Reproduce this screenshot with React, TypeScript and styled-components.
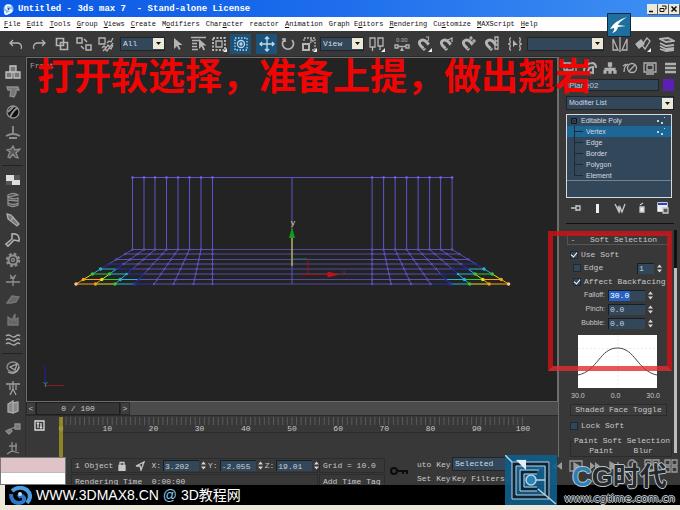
import React from "react";
import styled, { createGlobalStyle } from "styled-components";

const mono = '"Liberation Mono", "Noto Sans CJK SC", monospace';
const sans = '"Liberation Sans", "Noto Sans CJK SC", sans-serif';
const panel = "#383838";
const field = "#33475a";

const GlobalStyle = createGlobalStyle`
  * { box-sizing: border-box; }
  body { margin: 0; background: ${panel}; }
  button, input, select { font: inherit; color: inherit; margin: 0; padding: 0; border: 0; border-radius: 0; background: none; }
  svg { display: block; flex: none; }
`;

const Window = styled.div`
  position: relative;
  display: flex;
  flex-direction: column;
  height: 100vh;
  overflow: hidden;
  background: ${panel};
  color: #c8c8c8;
  font: 8px/10px ${mono};
  white-space: pre;
`;

const TitleBar = styled.header`
  display: flex;
  align-items: center;
  gap: 4px;
  flex: none;
  height: 17px;
  padding: 0 1px 0 3px;
  background: linear-gradient(90deg, #0a58e4, #1b6bec 45%, #3f90f2);
  color: #fff;
`;
const Title = styled.h1`
  flex: 1;
  margin: 0;
  font: bold 9px/12px ${mono};
`;
const CaptionButton = styled.button`
  display: grid;
  place-items: center;
  width: 10px;
  height: 10px;
  margin-left: -3px;
  background: #ece9d8 !important;
  box-shadow: 1px 1px 0 #55585c;
`;

const MenuBar = styled.nav`
  display: flex;
  align-items: center;
  gap: 6px;
  flex: none;
  height: 14px;
  padding-left: 4px;
  background: #fff;
  color: #111;
  font: 7px/10px ${mono};
`;
const MenuItem = styled.button``;

const Toolbar = styled.div`
  display: flex;
  align-items: center;
  flex: none;
  height: 26px;
  padding: 1px 0 1px 4px;
  border-bottom: 1px solid #2b2b2b;
`;
const ToolSlot = styled.button<{ $w: number; $on?: boolean; $after?: number }>`
  display: grid;
  place-items: center;
  flex: none;
  width: ${(p) => p.$w}px;
  height: 20px;
  margin-right: ${(p) => p.$after ?? 0}px;
  background: ${(p) => (p.$on ? "#1d5278" : "transparent")} !important;
  color: ${(p) => (p.$on ? "#b9dcf2" : "#b4b4b4")} !important;
`;

const DropFrame = styled.label<{ $w?: number; $after?: number; $sans?: boolean }>`
  display: flex;
  align-items: center;
  flex: ${(p) => (p.$w ? `0 0 ${p.$w}px` : "1")};
  min-width: 0;
  height: 14px;
  margin-right: ${(p) => p.$after ?? 0}px;
  border: 1px solid #202428;
  background: ${field};
  color: #d4dbe1;
  font: ${(p) => (p.$sans ? `7px/10px ${sans}` : `8px/10px ${mono}`)};
`;
const DropSelect = styled.select`
  flex: 1;
  min-width: 0;
  padding-left: 2px !important;
  appearance: none;
  outline: 0;
`;
const DropArrow = styled.span`
  display: grid;
  place-items: center;
  flex: none;
  width: 11px;
  height: 11px;
  background: #ece9d8;
`;

const Work = styled.main`
  display: flex;
  flex: 1;
  min-height: 0;
`;
const SideTools = styled.aside`
  display: flex;
  flex-direction: column;
  flex: none;
  width: 26px;
  padding-top: 5px;
  border-right: 1px solid #303030;
  overflow: hidden;
`;
const SideGroup = styled.div`
  display: flex;
  flex-direction: column;
  padding-bottom: 3px;
  margin: 0 2px 4px;
  border-bottom: 1px solid #222;
`;
const SideButton = styled.button`
  display: grid;
  place-items: center;
  height: 20px;
  color: #8f8f8f !important;
`;

const Center = styled.section`
  display: flex;
  flex-direction: column;
  flex: 1;
  min-width: 0;
`;
const Viewport = styled.div`
  position: relative;
  flex: 1;
  min-height: 0;
  border: 1px solid #6d6d6d;
  background: #232323;
`;
const ViewName = styled.span`
  position: absolute;
  top: 3px;
  left: 3px;
  color: #a0a0a0;
`;
const Caption = styled.p`
  position: absolute;
  z-index: 3;
  top: -6px;
  left: 10px;
  margin: 0;
  color: #f00505;
  font: bold 37px/44px "Noto Sans CJK SC", sans-serif;
`;
const Scene = styled.svg`
  width: 100%;
  height: 100%;
`;

const TimeSlider = styled.div`
  display: flex;
  flex: none;
  height: 14px;
  border-bottom: 1px solid #2a2a2a;
  background: #4b4b4b;
`;
const TimeStep = styled.button`
  width: 10px;
  background: #3e3e3e !important;
  border: 1px solid #2a2a2a !important;
`;
const TimeThumb = styled.button`
  width: 84px;
  background: #363636 !important;
  border: 1px solid #1e1e1e !important;
`;
const TrackBar = styled.div`
  display: flex;
  flex: none;
  height: 41px;
  padding-right: 35px;
`;
const TrackToggle = styled.button`
  display: grid;
  place-items: center;
  width: 27px;
  height: 18px;
`;
const Ruler = styled.div`
  position: relative;
  flex: 1;
  margin-left: 8px;
  background: linear-gradient(90deg, #5c5c5c 1px, transparent 1px) 0 1px / 1% 8px repeat-x;
`;
const RulerLabels = styled.div`
  display: flex;
  justify-content: space-between;
  height: 17px;
  padding-top: 8px;
  border-bottom: 1px solid #2b2b2b;
`;
const RulerLabel = styled.span`
  display: flex;
  justify-content: center;
  width: 0;
`;
const FrameMarker = styled.span`
  position: absolute;
  top: 1px;
  left: -2px;
  bottom: 0;
  width: 4px;
  background: rgba(170, 158, 30, 0.75);
`;

const Command = styled.aside`
  position: relative;
  display: flex;
  flex-direction: column;
  flex: none;
  width: 122px;
  padding: 0 6px 0 7px;
  border-left: 1px solid #6d6d6d;
`;
const Tabs = styled.div`
  display: flex;
  height: 21px;
  margin: 0 -6px;
`;
const Tab = styled.button`
  display: grid;
  place-items: center;
  flex: 1;
  color: #b0b0b0 !important;
`;
const NameRow = styled.div`
  display: flex;
  gap: 4px;
  margin: 1px 0 5px;
`;
const NameInput = styled.input`
  flex: 1;
  min-width: 0;
  height: 12px;
  padding-left: 2px !important;
  background: ${field} !important;
  border: 1px solid #202428 !important;
  font: 8px/10px ${sans} !important;
`;
const Swatch = styled.button`
  width: 11px;
  background: #5a1fb4 !important;
`;
const Stack = styled.ul`
  flex: none;
  height: 84px;
  margin: 4px 2px 0 0;
  padding: 0;
  list-style: none;
  border: 1px solid #d5dade;
  background: ${field};
  color: #d4dbe1;
  font: 7px/11px ${sans};
`;
const StackRow = styled.li<{ $level: number; $on?: boolean }>`
  display: flex;
  align-items: center;
  gap: ${(p) => (p.$level ? 3 : 4)}px;
  height: 11px;
  padding: 0 5px 0 ${(p) => (p.$level ? 7 : 4)}px;
  background: ${(p) => (p.$on ? "#1c6796" : "transparent")};
  &:last-child { border-bottom: 1px solid #75818b; }
`;
const StackName = styled.span`
  flex: 1;
`;
const StackTools = styled.div`
  display: flex;
  align-items: center;
  justify-content: space-around;
  flex: none;
  height: 26px;
  padding-bottom: 5px;
  border-bottom: 1px solid #111;
`;
const RollHead = styled.button`
  display: grid;
  grid-template-columns: 10px 1fr;
  align-items: center;
  flex: none;
  height: 11px;
  margin: 10px 4px 4px 1px !important;
  border: 1px solid #555 !important;
`;
const Form = styled.div`
  display: flex;
  flex-direction: column;
  flex: 1;
  min-height: 0;
  overflow: hidden;
  padding-left: 4px;
`;
const FormRow = styled.div<{ $h: number; $indent?: number; $end?: boolean; $right?: number }>`
  display: flex;
  align-items: center;
  flex: none;
  gap: 3px;
  height: ${(p) => p.$h}px;
  padding: 0 ${(p) => p.$right ?? 0}px 0 ${(p) => p.$indent ?? 0}px;
  justify-content: ${(p) => (p.$end ? "flex-end" : "flex-start")};
`;
const CheckLabel = styled.label`
  display: flex;
  align-items: center;
  flex: 1;
  gap: 3px;
`;
const Check = styled.input`
  appearance: none;
  display: grid;
  place-items: center;
  flex: none;
  width: 8px;
  height: 8px;
  border: 1px solid #1d2935 !important;
  background: ${field} !important;
  &:checked::after {
    content: "";
    width: 3px;
    height: 5px;
    margin-top: -2px;
    border: solid #fff;
    border-width: 0 1px 1px 0;
    rotate: 40deg;
  }
`;
const FieldLabel = styled.label`
  font: 7px/10px ${sans};
`;
const NumberInput = styled.input<{ $w: number }>`
  width: ${(p) => p.$w}px;
  height: 11px;
  padding-left: 1px !important;
  border: 1px solid #161d24 !important;
  border-width: 1px 0 0 1px !important;
  background: ${field} !important;
  color: #c5d3df !important;
`;
const SelectedField = styled(NumberInput)`
  background: linear-gradient(90deg, #2861c4 21px, ${field} 21px) !important;
  color: #fff !important;
`;
const CurveFrame = styled.div`
  flex: none;
  margin: 5px 17px 0 8px;
  height: 53px;
  background: #fff;
`;
const CurveLabels = styled.div`
  display: flex;
  justify-content: space-between;
  flex: none;
  margin: 3px 14px 3px 1px;
  font: 7px/10px ${sans};
`;
const WideButton = styled.button`
  flex: none;
  height: 12px;
  margin: 0 7px 0 0 !important;
  border: 1px solid #2b2b2b !important;
  background: #3d3d3d !important;
`;
const PaintGroup = styled.fieldset`
  flex: none;
  margin: 0 2px 0 0;
  padding: 0 8px;
  border: 1px solid #2b2b2b;
  min-width: 0;
`;
const PaintLegend = styled.legend`
  margin-left: -6px;
  padding: 0 1px;
`;
const PaintButtons = styled.div`
  display: flex;
  justify-content: space-around;
`;
const RedFrame = styled.div`
  position: absolute;
  z-index: 4;
  top: 174px;
  left: -11px;
  right: 8px;
  height: 140px;
  border: 5px solid rgba(205, 18, 22, 0.82);
  border-bottom-color: rgba(225, 45, 48, 0.8);
  pointer-events: none;
`;
const ScrollTrack = styled.span`
  position: absolute;
  top: 173px;
  right: 3px;
  bottom: 4px;
  width: 3px;
  background: linear-gradient(#111 38px, #bdbdbd 38px);
`;

const Status = styled.footer`
  display: flex;
  flex: none;
  height: 28px;
  overflow: hidden;
`;
const Listener = styled.div`
  flex: none;
  width: 66px;
  height: 28px;
  border: 1px solid #777;
  background: linear-gradient(#dfc3c8 14px, #777 14px, #fff 15px);
`;
const StatusColumn = styled.div<{ $w?: number; $left?: number }>`
  display: flex;
  flex-direction: column;
  flex: ${(p) => (p.$w ? `0 0 ${p.$w}px` : "1")};
  margin-left: ${(p) => p.$left ?? 0}px;
  min-width: 0;
`;
const StatusRow = styled.div`
  display: flex;
  align-items: center;
  flex: none;
  height: 15px;
  margin-top: 1px;
  padding-left: 3px;
  gap: 2px;
  border: 1px solid #2c2c2c;
`;
const StatusText = styled.span<{ $w?: number }>`
  width: ${(p) => (p.$w ? `${p.$w}px` : "auto")};
`;
const StatusIcon = styled.button<{ $w: number }>`
  display: grid;
  place-items: center;
  flex: none;
  width: ${(p) => p.$w}px;
`;
const KeyButton = styled.button`
  display: flex;
  align-items: center;
  height: 14px;
  padding-top: 2px !important;
  text-align: left;
`;
const KeyMode = styled.button`
  display: grid;
  place-items: center;
  width: 28px;
  height: 28px;
`;
const Playback = styled.div`
  display: flex;
  align-items: center;
  justify-content: space-around;
  flex: none;
  width: 152px;
  height: 17px;
  color: #9a9a9a;
`;

const Footer = styled.div`
  flex: none;
  padding: 0 0 5px 5px;
  background: #ece9d8;
`;
const Strip = styled.div`
  display: flex;
  align-items: center;
  gap: 4px;
  height: 20px;
  padding-left: 4px;
  background: #000;
  color: #fff;
  font: 14px/20px ${sans};
`;
const At = styled.span`
  color: #8ccdf4;
`;

const BirdBadge = styled.div`
  position: absolute;
  z-index: 5;
  top: 13px;
  right: 49px;
`;
const CubeBadge = styled.div`
  position: absolute;
  z-index: 5;
  right: 123px;
  bottom: 5px;
`;
const Brand = styled.div`
  position: absolute;
  z-index: 5;
  right: 5px;
  bottom: 5px;
  display: flex;
  flex-direction: column;
  align-items: center;
  color: #26292b;
  text-shadow: 1px 0 #bcc6cc, -1px 0 #bcc6cc, 0 1px #bcc6cc, 0 -1px #bcc6cc;
`;
const BrandName = styled.span`
  font: bold 27px/29px "Liberation Sans", "Noto Sans CJK SC", sans-serif;
`;
const BrandInitial = styled.span`
  color: #2d7fb8;
`;
const BrandLink = styled.a`
  color: #24282b;
  text-decoration: none;
  font: 11px/13px "DejaVu Sans", sans-serif;
`;

type DrawProps = { children: React.ReactNode; w?: number; h?: number };
const Glyph = ({ children, w = 16, h = 16 }: DrawProps) => (
  <svg width={w} height={h} viewBox={`0 0 ${w} ${h}`} fill="none" stroke="currentColor" strokeWidth="1.3" aria-hidden="true">
    {children}
  </svg>
);

const Arrow = () => (
  <DropArrow>
    <svg width="5" height="3" viewBox="0 0 5 3"><path d="M0 0h5L2.500 3z" fill="#111" /></svg>
  </DropArrow>
);
const Drop = ({ label, value, ...rest }: { label: string; value: string; $w?: number; $after?: number; $sans?: boolean }) => (
  <DropFrame {...rest}>
    <DropSelect aria-label={label} defaultValue={value}><option value={value}>{value}</option></DropSelect>
    <Arrow />
  </DropFrame>
);
const Spinner = () => (
  <svg width="5" height="9" viewBox="0 0 5 9" fill="#d6d6d6"><path d="M0 3.500h5L2.500 0.500zM0 5.500h5L2.500 8.500z" /></svg>
);

const Magnet = ({ extra }: { extra: React.ReactNode }) => (
  <Glyph>
    <path d="M9 14L4.500 9.500Q2 6 5 4.500t6 2l2 2.500" strokeWidth="3" />
    <path d="M7.500 12.500l2.500-1.500M11.500 10l2.500-2" stroke="#383838" strokeWidth="1" />
    {extra}
  </Glyph>
);
const corner = <path d="M16 12v4h-4z" fill="#eee" stroke="none" />;

const icons = {
  undo: <Glyph><path d="M5 4L2 7l3 3M2 7h8a4 4 0 0 1 3 6" /></Glyph>,
  redo: <Glyph><path d="M11 4l3 3-3 3M14 7H6a4 4 0 0 0-3 6" /></Glyph>,
  link: <Glyph><path d="M2.500 2.500h7v7h-7zM6.500 6.500h7v7h-7z" strokeWidth="1.600" /></Glyph>,
  unlink: <Glyph><path d="M1 2h5v5H1zM10 9h5v5h-5zM8 3l3 3M5 10l3 3" strokeWidth="1.500" /></Glyph>,
  bind: <Glyph><path d="M1 2h6v6H1z" /><path d="M4 12l2-2 2 2 2-3 2 2 3-4M5 15l2-2 2 2 2-3 2 1 2-4M9 7l2-2 2 1 2-4" /></Glyph>,
  cursor: <Glyph><path d="M5 2v11l3-3 2 4 1.500-1-2-4h4z" fill="currentColor" stroke="none" /></Glyph>,
  byName: <Glyph><path d="M0 1.500h15M1 4.500h7M1 7.500h5M1 10.500h5M1 13.500h6" /><path d="M8 3v10l2.500-2.500 2 4 1.500-1-2-4h3.500z" fill="currentColor" stroke="none" /></Glyph>,
  region: <Glyph><path d="M2 2h12v12H2z" strokeDasharray="2 1.500" strokeWidth="2" /><path d="M5 5h6v6H5z" />{corner}</Glyph>,
  windowed: <Glyph><path d="M2 2h12v12H2z" strokeDasharray="1.500 1.500" /><circle cx="8" cy="8" r="3.500" /><circle cx="8" cy="8" r="1" /></Glyph>,
  move: <Glyph><path d="M8 1v14M1 8h14M6 3l2-2 2 2M6 13l2 2 2-2M3 6L1 8l2 2M13 6l2 2-2 2" /></Glyph>,
  rotate: <Glyph><path d="M4 4a5.500 5.500 0 1 0 8 0M2 3l3 0v3" strokeWidth="1.700" /></Glyph>,
  scale: <Glyph><path d="M2 8h6v6H2z" strokeWidth="2" /><path d="M3 5V2h11v12h-4M7 9l5-5M9 4h3v3" strokeDasharray="2 1" />{corner}</Glyph>,
  pivot: <Glyph><path d="M1 2h5v9H1zM9 2h5v8H9zM3.500 11v4M11 10v4" />{corner}</Glyph>,
  magnet3: <Magnet extra={<><path d="M10 1h3l-1 2 1 1-2 1" strokeWidth="1" />{corner}</>} />,
  magnetAngle: <Magnet extra={<path d="M10 4l4-2v4" />} />,
  magnetPercent: <Magnet extra={<><circle cx="11" cy="2" r="1" /><circle cx="14" cy="5" r="1" /></>} />,
  magnetSpin: <Magnet extra={<path d="M12 1h3v12h-3zM12 5h3M12 9h3" />} />,
  named: <Glyph><path d="M4 2Q2 2 3 5t-2 3q3 0 2 3t1 3M12 2q2 0 1 3t2 3q-3 0-2 3t-1 3" /><path d="M6 4v7l2-2h3z" fill="currentColor" stroke="none" /></Glyph>,
  mirror: <Glyph><path d="M1 3v11h5zM15 3v11h-5zM8 1v15" /></Glyph>,
  align: <Glyph><path d="M1 8l5-4 3 4-5 4z" fill="currentColor" /><path d="M7 9l5-7 3 3-5 8z" />{corner}</Glyph>,
  layers: <Glyph><path d="M1 3l8-1 6 3-8 1zM1 7l6 3 8-1M1 10l6 3 8-1M1 13l6 2 8-1" fill="none" strokeWidth="1.800" /></Glyph>,
};

const sideIcons: { name: string; art: React.ReactNode }[][] = [
  [
    { name: "Rigid bodies", art: <><path d="M1 8h6v6H1zM9 8h6v6H9zM5 2h6v6H5z" fill="#777" stroke="#c4c4c4" /></> },
    { name: "Cloth", art: <path d="M2 3h11l1 3h-3v3l-2 4-4-1 1-6H3z" fill="#777" /> },
    { name: "Soft body", art: <><circle cx="8" cy="8" r="6" fill="#101010" /><path d="M5 13q4-8 8-9M3 8q4-4 6-6" strokeWidth="2" /></> },
    { name: "Rope", art: <path d="M1 12q7-4 14 0M8 10V2M4 14h8" strokeWidth="1.800" /> },
    { name: "Deforming mesh", art: <path d="M8 2l2 4 5-1-4 4 2 5-3-1-2-3-3 4-2-1 2-5-3-2 4-1z" fill="#555" /> },
  ],
  [
    { name: "Plane", art: <><path d="M1 3h14v10H1z" fill="#ddd" stroke="none" /><path d="M9 3h6v5H9zM1 9h6v4H1z" fill="#555" stroke="none" /></> },
    { name: "Spring", art: <path d="M3 3q6-3 10 0L3 5q5 3 10 1v3L3 8v3q6 3 10 0v2q-5 3-10 0z" /> },
    { name: "Linear dashpot", art: <path d="M2 2l4 1 8 9-2 2-9-7zM6 8l3-3" fill="#777" stroke="#aaa" /> },
    { name: "Angular dashpot", art: <path d="M7 2q8-1 7 7l-5-1-6 6-2-2 6-5z" stroke="#b0b0b0" strokeWidth="1.600" /> },
    { name: "Motor", art: <><circle cx="8" cy="8" r="6" strokeWidth="2.400" strokeDasharray="2.600 2.112" /><circle cx="8" cy="8" r="4.500" strokeWidth="2" /><circle cx="8" cy="8" r="1.500" /></> },
    { name: "Wind", art: <path d="M1 10h14M8 10v4M8 10V6L5 3M8 6l3-3M5 6h5" /> },
    { name: "Toy car", art: <path d="M2 11l5-7 7 1-3 5-5 1z" fill="#666" stroke="#777" /> },
    { name: "Fracture", art: <path d="M3 13V5l4 3 3-6v6l3-2v7z" fill="#666" stroke="#777" /> },
    { name: "Water", art: <path d="M1 4q2-2 5 0t5 0 4 0M1 8q2-2 5 0t5 0 4 0M1 12q2-2 5 0t5 0 4 0" stroke="#aaa" /> },
  ],
  [
    { name: "Constraint solver", art: <><ellipse cx="8" cy="7" rx="6" ry="5" /><path d="M3 12q8 4 11-5M5 7l5 3 2-6z" stroke="#aaa" /></> },
    { name: "Rag doll", art: <path d="M1 4h14M8 1v8M5 15l3-6 3 6M5 5v5M11 5v5" stroke="#a0a0a0" /> },
    { name: "Hinge", art: <path d="M3 4l5-3v12l-5-1zM8 3l5-1v9l-5 2z" fill="#888" stroke="#aaa" /> },
    { name: "Point to point", art: <path d="M1 11l4-2 2 2-3 3zM6 9l4-2M10 4h5v5h-5z" fill="#777" /> },
    { name: "Carwheel", art: <path d="M2 14l5-3 7 2M7 2v10M4 6h8M11 3v8" /> },
  ],
];

const menus: [string, number][] = [
  ["File", 0], ["Edit", 0], ["Tools", 0], ["Group", 0], ["Views", 0], ["Create", 0], ["Modifiers", 1], ["Character", 4],
  ["reactor", -1], ["Animation", 0], ["Graph Editors", 7], ["Rendering", 0], ["Customize", 2], ["MAXScript", 0], ["Help", 0],
];

const rowY = [249.5, 254, 259.5, 264, 269, 274, 279.5, 284];
const topX = [133, 144.5, 155.5, 167, 178.5, 190, 201.5, 213];
const footX = [76.5, 96, 115.5, 135, 154.5, 174, 194, 213];
const centerX = 292.8;
const weightColor = (col: number, row: number) => {
  const s = Math.hypot(col * 1.15, 7 - row);
  if (s < 0.4) return "#ffc890";
  if (s < 1.3) return "#f5a510";
  if (s < 1.9) return "#e6dc20";
  if (s < 2.45) return "#35c93a";
  if (s < 3.2) return "#28b4d6";
  if (s < 4.1) return "#2430b0";
  return "#5950b8";
};
const meshX = (col: number, row: number) => topX[col] + ((footX[col] - topX[col]) * (rowY[row] - rowY[0])) / (rowY[7] - rowY[0]);

const MeshSide = ({ flip }: { flip?: boolean }) => {
  const fx = (x: number) => (flip ? 2 * centerX - x : x);
  return (
    <g>
      {topX.map((x, c) => (
        <g key={c}>
          <path d={`M${fx(x)} 177.500V249.500`} stroke="#5d54cb" />
          <circle cx={fx(x)} cy="177.500" r="1.300" fill="#6d63e6" />
          {rowY.map((y, r) => (
            <g key={r}>
              {r < 7 && <path d={`M${fx(meshX(c, r))} ${y}L${fx(meshX(c, r + 1))} ${rowY[r + 1]}`} stroke={weightColor(c, r + 0.5)} />}
              {c < 7 && <path d={`M${fx(meshX(c, r))} ${y}H${fx(meshX(c + 1, r))}`} stroke={weightColor(c + 0.5, r)} />}
            </g>
          ))}
          {rowY.map((y, r) => <circle key={r} cx={fx(meshX(c, r))} cy={y} r={c + 7 - r < 4 ? 1.7 : 1.2} fill={weightColor(c, r)} />)}
        </g>
      ))}
    </g>
  );
};

const Mesh = () => (
  <Scene viewBox="28 58 529 343" fill="none" strokeWidth="1" role="img" aria-label="Front view of the editable plane">
    <path d="M133 177.500H452.500" stroke="#5d54cb" />
    {rowY.map((y) => <path key={y} d={`M213 ${y}H372.600`} stroke="#504a9c" />)}
    <path d="M292.500 177.500V284" stroke="#5d54cb" />
    <MeshSide />
    <MeshSide flip />
    <path d="M292.500 238v28" stroke="#e6e23a" />
    <path d="M292.500 227l3 11h-6z" fill="#159a1d" />
    <path d="M293 259h15" stroke="#1f6c74" />
    <path d="M308.500 259v15M302 274.500h30" stroke="#a3121c" />
    <path d="M328 271.500l12 3-12 3z" fill="#c4101c" />
    <text x="291" y="225" fill="#e9e28a" fontFamily="Liberation Mono" fontSize="8">y</text>
    <text x="342" y="275" fill="#9c1c22" fontFamily="Liberation Mono" fontSize="7">x</text>
    <path d="M45.500 366v19" stroke="#2022a8" />
    <path d="M47 385.500h17" stroke="#8a1c20" />
    <path d="M44 382l2 2 2-2M46 384v3" stroke="#3b8c86" />
  </Scene>
);

const subLevels = ["Vertex", "Edge", "Border", "Polygon", "Element"];
const Dots = () => <svg width="10" height="9" viewBox="0 0 10 9" fill="#b8d4e6"><path d="M1 4h2v2H1zM5 6h2v2H5zM8 1h1v1H8z" /></svg>;

const CommandPanel = () => (
  <Command>
    <Tabs>
      <Tab aria-label="Create"><Glyph><path d="M2 3h9v7H2zM5 6h9v7H5z" /></Glyph></Tab>
      <Tab aria-label="Modify"><Glyph><path d="M2 12q0-9 9-9 3 1 3 5M6 12q0-5 5-5v6z" strokeWidth="2" /></Glyph></Tab>
      <Tab aria-label="Hierarchy"><Glyph><path d="M6.500 3h3v3h-3zM2 11h2v2H2zM7 11h2v2H7zM12 11h2v2h-2zM8 6v5M3 11V8.500h10V11" fill="currentColor" /></Glyph></Tab>
      <Tab aria-label="Motion"><Glyph><circle cx="10" cy="8" r="4.500" /><path d="M7 11l6-6M2 12q0-6 4-8M1 6l3-2" /></Glyph></Tab>
      <Tab aria-label="Display"><Glyph><path d="M2 3h12v9H2zM5 5h6v5H5zM4 14h8" /></Glyph></Tab>
      <Tab aria-label="Utilities"><Glyph><path d="M3 4h11M3 8h11M3 12h11" strokeWidth="2.500" /></Glyph></Tab>
    </Tabs>
    <NameRow>
      <NameInput aria-label="Object name" defaultValue="Plane02" />
      <Swatch aria-label="Object color" />
    </NameRow>
    <Drop label="Modifier List" value="Modifier List" $w={14} $sans />
    <Stack>
      <StackRow $level={0}>
        <svg width="6" height="6" viewBox="0 0 6 6" fill="none" stroke="#0d1720"><path d="M.5.5h5v5h-5zM2 3h2" /></svg>
        <StackName>Editable Poly</StackName><Dots />
      </StackRow>
      {subLevels.map((name, i) => (
        <StackRow key={name} $level={1} $on={i === 0}>
          <svg width="9" height="11" viewBox="0 0 9 11" fill="none" stroke="#1c2b38"><path d={i === 4 ? "M.5 0V5.500H9" : "M.5 0V11M.5 5.500H9"} /></svg>
          <StackName>{name}</StackName>{i === 0 && <Dots />}
        </StackRow>
      ))}
    </Stack>
    <StackTools>
      <StatusIcon $w={16} aria-label="Pin stack"><Glyph w={12} h={12}><path d="M0 6h5M5 3v6M5 4h4v4H5" /></Glyph></StatusIcon>
      <StatusIcon $w={16} aria-label="Show end result"><Glyph w={6} h={12}><path d="M1 2h3v9H1z" fill="#eee" stroke="none" /></Glyph></StatusIcon>
      <StatusIcon $w={16} aria-label="Make unique"><Glyph w={12} h={12}><path d="M1 2l4 8 1-5 2 5 3-8M4 4l2 6" /></Glyph></StatusIcon>
      <StatusIcon $w={16} aria-label="Remove modifier"><Glyph w={10} h={12}><path d="M3 5h4v5H3zM3 3l3-2" fill="#eee" /></Glyph></StatusIcon>
      <StatusIcon $w={16} aria-label="Configure modifier sets"><Glyph w={12} h={12}><path d="M1 1h9v8H1z" fill="#e8e8f8" stroke="#fff" /><path d="M1 2h9" stroke="#2a3fd0" strokeWidth="2" /><path d="M6 6h5v5H6z" fill="#555" /></Glyph></StatusIcon>
    </StackTools>
    <RollHead><span>-</span><span>Soft Selection</span></RollHead>
    <Form>
      <FormRow $h={12}><CheckLabel><Check type="checkbox" defaultChecked />Use Soft</CheckLabel></FormRow>
      <FormRow $h={14} $indent={3} $right={12}>
        <CheckLabel><Check type="checkbox" />Edge</CheckLabel>
        <NumberInput $w={17} aria-label="Edge distance" defaultValue="1" disabled /><Spinner />
      </FormRow>
      <FormRow $h={13} $indent={3}><CheckLabel><Check type="checkbox" defaultChecked />Affect Backfacing</CheckLabel></FormRow>
      <FormRow $h={14} $end $right={21}><FieldLabel htmlFor="falloff">Falloff:</FieldLabel><SelectedField $w={37} id="falloff" defaultValue="30.0" /><Spinner /></FormRow>
      <FormRow $h={14} $end $right={21}><FieldLabel htmlFor="pinch">Pinch:</FieldLabel><NumberInput $w={37} id="pinch" defaultValue="0.0" /><Spinner /></FormRow>
      <FormRow $h={14} $end $right={21}><FieldLabel htmlFor="bubble">Bubble:</FieldLabel><NumberInput $w={37} id="bubble" defaultValue="0.0" /><Spinner /></FormRow>
      <CurveFrame>
        <svg width="100%" height="100%" viewBox="0 0 80 53" preserveAspectRatio="none" fill="none">
          <path d="M0 13.500H80M40.500 0V53" stroke="#ececec" strokeDasharray="2 2" />
          <path d="M0 40C20 36 22 13 40 13S60 36 80 40" stroke="#444" />
        </svg>
      </CurveFrame>
      <CurveLabels><span>30.0</span><span>0.0</span><span>30.0</span></CurveLabels>
      <WideButton>Shaded Face Toggle</WideButton>
      <FormRow $h={20}><CheckLabel><Check type="checkbox" />Lock Soft</CheckLabel></FormRow>
      <PaintGroup>
        <PaintLegend>Paint Soft Selection</PaintLegend>
        <PaintButtons><span>Paint</span><span>Blur</span></PaintButtons>
      </PaintGroup>
    </Form>
    <ScrollTrack />
    <RedFrame />
  </Command>
);

const Coordinate = ({ axis, value }: { axis: string; value: string }) => {
  const id = `axis-${axis}`;
  return (
    <>
      <label htmlFor={id}>{axis}:</label>
      <NumberInput $w={36} id={id} defaultValue={value} />
      <Spinner />
    </>
  );
};

const StatusBar = () => (
  <Status>
    <Listener />
    <StatusColumn $w={247} $left={5}>
      <StatusRow>
        <StatusText $w={45}>1 Object</StatusText>
        <StatusIcon $w={14} aria-label="Lock selection"><Glyph w={8} h={10}><path d="M1 4.500h6v5H1z" fill="currentColor" /><path d="M2 4V1.500h4V4" /></Glyph></StatusIcon>
        <StatusIcon $w={18} aria-label="Absolute mode"><Glyph w={10} h={10}><path d="M1 5l8-4-3 8-1-4z" /></Glyph></StatusIcon>
        <Coordinate axis="X" value="3.202" />
        <Coordinate axis="Y" value="-2.055" />
        <Coordinate axis="Z" value="19.01" />
      </StatusRow>
      <StatusRow>Rendering Time  0:00:00</StatusRow>
    </StatusColumn>
    <StatusColumn $w={66} $left={1}>
      <StatusRow>Grid = 10.0</StatusRow>
      <StatusRow>Add Time Tag</StatusRow>
    </StatusColumn>
    <KeyMode aria-label="Set keys"><Glyph w={18} h={12}><circle cx="4" cy="6" r="3" stroke="#0c0c0c" strokeWidth="2" /><path d="M7 6h10v3M13 6v3" stroke="#0c0c0c" strokeWidth="2" /></Glyph></KeyMode>
    <StatusColumn $w={35} $left={4}>
      <KeyButton>uto Key</KeyButton>
      <KeyButton>Set Key</KeyButton>
    </StatusColumn>
    <StatusColumn>
      <Drop label="Key selection set" value="Selected" />
      <KeyButton>Key Filters...</KeyButton>
    </StatusColumn>
    <Playback>
      <Glyph><path d="M3 4v8M12 4v8L5 8z" fill="currentColor" /></Glyph>
      <Glyph><path d="M13 4v8L8 8zM8 4v8L3 8z" fill="currentColor" stroke="none" /></Glyph>
      <Glyph><path d="M2 3h12v10H2z" /><path d="M6 5v6l5-3z" fill="currentColor" /></Glyph>
      <Glyph><path d="M3 4v8l5-4zM8 4v8l5-4z" fill="currentColor" stroke="none" /></Glyph>
      <Glyph><path d="M12 4v8M4 4v8l7-4z" fill="currentColor" /></Glyph>
      <Glyph><circle cx="7" cy="6" r="4" /><path d="M10 9l4 5" /></Glyph>
      <Glyph><path d="M1 2h6v5H1zM9 2h6v5H9zM5 9v6M11 9v6M2 12h12" /></Glyph>
      <Glyph><path d="M2 2h5v5H2zM9 2h5v5H9zM2 9h5v5H2zM9 9h5v5H9z" /></Glyph>
    </Playback>
  </Status>
);

export default function App() {
  return (
    <Window>
      <GlobalStyle />
      <TitleBar>
        <svg width="11" height="12" viewBox="0 0 11 12"><circle cx="5.500" cy="6" r="5" fill="#8fc0f5" /><path d="M8 3Q3 1 3 4t4 3-1 3-4-2" stroke="#fff" strokeWidth="1.600" fill="none" /><circle cx="5.500" cy="6" r="1" fill="#123c94" /></svg>
        <Title>Untitled - 3ds max 7  - Stand-alone License</Title>
        <CaptionButton aria-label="Minimize"><svg width="8" height="8" viewBox="0 0 8 8"><path d="M1 6.500h4" stroke="#111" strokeWidth="1.500" /></svg></CaptionButton>
        <CaptionButton aria-label="Restore"><svg width="8" height="8" viewBox="0 0 8 8"><path d="M3 1h4v3H6M1 3.500h4v3H1z" stroke="#111" fill="none" /></svg></CaptionButton>
        <CaptionButton aria-label="Close"><svg width="8" height="8" viewBox="0 0 8 8"><path d="M1.500 1.500l5 5M6.500 1.500l-5 5" stroke="#111" strokeWidth="1.600" /></svg></CaptionButton>
      </TitleBar>
      <MenuBar>
        {menus.map(([text, at]) => (
          <MenuItem key={text}>
            {at < 0 ? text : <>{text.slice(0, at)}<u>{text[at]}</u>{text.slice(at + 1)}</>}
          </MenuItem>
        ))}
      </MenuBar>
      <Toolbar>
        <ToolSlot $w={23} aria-label="Undo">{icons.undo}</ToolSlot>
        <ToolSlot $w={23} aria-label="Redo">{icons.redo}</ToolSlot>
        <ToolSlot $w={23} aria-label="Select and link">{icons.link}</ToolSlot>
        <ToolSlot $w={21} aria-label="Unlink selection">{icons.unlink}</ToolSlot>
        <ToolSlot $w={23} $after={3} aria-label="Bind to space warp">{icons.bind}</ToolSlot>
        <Drop label="Selection filter" value="All" $w={45} $after={1} />
        <ToolSlot $w={22} aria-label="Select object">{icons.cursor}</ToolSlot>
        <ToolSlot $w={21} aria-label="Select by name">{icons.byName}</ToolSlot>
        <ToolSlot $w={20} $after={1} aria-label="Selection region">{icons.region}</ToolSlot>
        <ToolSlot $w={21} $on $after={5} aria-label="Window or crossing">{icons.windowed}</ToolSlot>
        <ToolSlot $w={21} $on aria-label="Select and move">{icons.move}</ToolSlot>
        <ToolSlot $w={21} aria-label="Select and rotate">{icons.rotate}</ToolSlot>
        <ToolSlot $w={21} $after={1} aria-label="Select and scale">{icons.scale}</ToolSlot>
        <Drop label="Reference coordinate system" value="View" $w={44} />
        <ToolSlot $w={26} aria-label="Use pivot point center">{icons.pivot}</ToolSlot>
        <ToolSlot $w={23} aria-label="Select and manipulate">
          <Glyph><text x="2" y="6" fontSize="6" fontFamily="Liberation Sans" fill="currentColor" stroke="none">0.00</text><path d="M1 9h3v3H1zM12 9h3v3h-3zM4 10.500h8" /><path d="M8 11l2 4H6z" fill="currentColor" stroke="none" /></Glyph>
        </ToolSlot>
        <ToolSlot $w={22} aria-label="Snaps toggle">{icons.magnet3}</ToolSlot>
        <ToolSlot $w={22} aria-label="Angle snap">{icons.magnetAngle}</ToolSlot>
        <ToolSlot $w={22} aria-label="Percent snap">{icons.magnetPercent}</ToolSlot>
        <ToolSlot $w={23} aria-label="Spinner snap">{icons.magnetSpin}</ToolSlot>
        <ToolSlot $w={25} aria-label="Edit named selection sets">{icons.named}</ToolSlot>
        <Drop label="Named selection sets" value="" $after={5} />
        <ToolSlot $w={22} aria-label="Mirror">{icons.mirror}</ToolSlot>
        <ToolSlot $w={23} aria-label="Align">{icons.align}</ToolSlot>
        <ToolSlot $w={26} aria-label="Layer manager">{icons.layers}</ToolSlot>
      </Toolbar>
      <Work>
        <SideTools>
          {sideIcons.map((group, i) => (
            <SideGroup key={i}>
              {group.map((tool) => <SideButton key={tool.name} aria-label={tool.name}><Glyph>{tool.art}</Glyph></SideButton>)}
            </SideGroup>
          ))}
        </SideTools>
        <Center>
          <Viewport>
            <ViewName>Front</ViewName>
            <Mesh />
            <Caption>打开软选择，准备上提，做出翘岩</Caption>
          </Viewport>
          <TimeSlider>
            <TimeStep aria-label="Previous frame">&lt;</TimeStep>
            <TimeThumb>0 / 100</TimeThumb>
            <TimeStep aria-label="Next frame">&gt;</TimeStep>
          </TimeSlider>
          <TrackBar>
            <TrackToggle aria-label="Open mini curve editor"><Glyph w={11} h={11}><path d="M1 1h9v9H1zM4 3v5M7 3v5M3 4l1-1 1 1M6 7l1 1 1-1" stroke="#ddd" /></Glyph></TrackToggle>
            <Ruler>
              <RulerLabels>
                {Array.from({ length: 11 }, (_, i) => <RulerLabel key={i}>{i * 10}</RulerLabel>)}
              </RulerLabels>
              <FrameMarker />
            </Ruler>
          </TrackBar>
        </Center>
        <CommandPanel />
      </Work>
      <StatusBar />
      <Footer>
        <Strip>
          <svg width="23" height="19" viewBox="0 0 23 19" fill="none"><path d="M3 5Q10-1 18 4q6 6 0 13" stroke="#4a9be0" strokeWidth="4" /><path d="M2 8q0 8 7 9 7 0 6-5-2-4-6-1" stroke="#2b78c8" strokeWidth="4" /><circle cx="11" cy="8" r="2" fill="#b8e0ff" /></svg>
          <span>WWW.3DMAX8.CN <At>@</At> 3D教程网</span>
        </Strip>
      </Footer>
      <BirdBadge>
        <svg width="24" height="24" viewBox="0 0 24 24"><path d="M.5.5h23v23H.5z" fill="#1f6f9d" stroke="#10293a" /><path d="M3 16q4-8 17-12-8 5-9 8l8 1-8 1q-1 5-6 6 3-3 2-5z" fill="#fff" /></svg>
      </BirdBadge>
      <CubeBadge>
        <svg width="52" height="50" viewBox="0 0 52 50" fill="none" stroke="#b9d3e2" strokeWidth="1.500">
          <path d="M0 0h52v50H0z" fill="#0f5c8a" fillOpacity=".92" stroke="none" />
          <path d="M9 9h34v33H9z" stroke="#0a2438" strokeWidth="4" />
          <path d="M7 7h37v37H7zM11 11h29v29H11z" strokeWidth="1" />
          <path d="M32 17H17v17h15" stroke="#0a2438" strokeWidth="3" />
          <path d="M34 15H15v21h17M32 19H19v13h13" strokeWidth="1" />
          <path d="M0 0l7 7M51 49L33 34" />
          <circle cx="26" cy="25" r="5" fill="#2b82b5" /><path d="M31 25h9" />
          <path d="M11 5h10v10z" fill="#dff0f8" stroke="none" />
        </svg>
      </CubeBadge>
      <Brand>
        <BrandName><BrandInitial>C</BrandInitial>G时代</BrandName>
        <BrandLink href="#cgtime">www.cgtime.com.cn</BrandLink>
      </Brand>
    </Window>
  );
}
